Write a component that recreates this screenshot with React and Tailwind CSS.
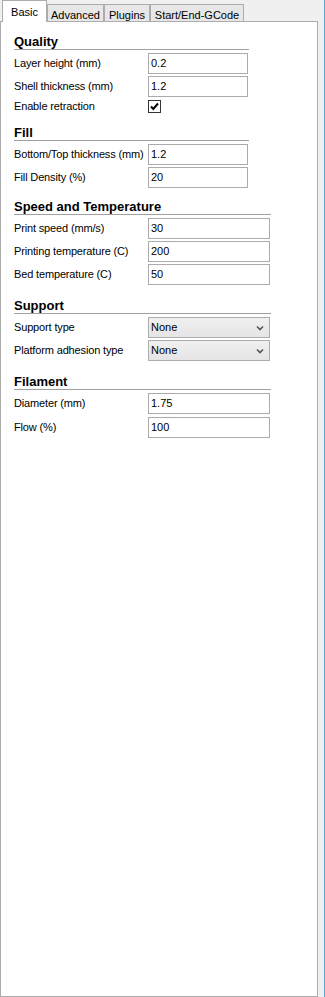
import React from "react";

function Header({ title, wide, className = "" }) {
  return (
    <div
      className={`${wide ? "w-[257px]" : "w-[235px]"} h-[15px] border-b border-[#a0a0a0] text-[13px] leading-[14px] font-bold text-black ${className}`}
    >
      {title}
    </div>
  );
}

function InputRow({ label, value, wide }) {
  return (
    <div className="flex items-center h-[21px]">
      <div className="w-[134px] text-[11px] leading-[13px] tracking-[-0.15px] text-black whitespace-nowrap">{label}</div>
      <div
        className={`${wide ? "w-[122px]" : "w-[100px]"} h-[21px] border border-[#ababab] bg-white flex items-center px-[2px] text-[11px] text-black`}
      >
        {value}
      </div>
    </div>
  );
}

function SelectRow({ label, value }) {
  return (
    <div className="flex items-center h-[21px]">
      <div className="w-[134px] text-[11px] leading-[13px] tracking-[-0.15px] text-black whitespace-nowrap">{label}</div>
      <div className="w-[122px] h-[21px] border border-[#acacac] bg-gradient-to-b from-[#f0f0f0] to-[#e5e5e5] flex items-center justify-between pl-[2px] pr-[5px] text-[11px] text-black">
        <span>{value}</span>
        <svg width="8" height="6" viewBox="0 0 8 6" className="mt-[1px]">
          <path d="M1 1.5 L4 4.5 L7 1.5" fill="none" stroke="#555" strokeWidth="1.6" />
        </svg>
      </div>
    </div>
  );
}

function Tab({ label, active, w }) {
  if (active) {
    return (
      <div
        className={`${w} h-[22px] relative top-[1px] z-10 bg-white border-l border-t border-r border-[#acacac] flex items-start justify-center pt-[3px] text-[11px] text-black`}
      >
        {label}
      </div>
    );
  }
  return (
    <div
      className={`${w} h-[17px] bg-[#e7e7e7] border-l border-t border-r border-[#acacac] flex items-start justify-center pt-[2px] text-[11px] text-black`}
    >
      {label}
    </div>
  );
}

export default function App() {
  return (
    <div
      className="w-[325px] h-[997px] bg-[#f0f0f0] flex overflow-hidden"
      style={{ fontFamily: '"Liberation Sans", Arial, sans-serif' }}
    >
      <div className="w-[318px] h-full flex flex-col">
        <div className="h-[21px] flex items-end pl-[2px]">
          <Tab label="Basic" active w="w-[45px]" />
          <Tab label="Advanced" w="w-[57px]" />
          <Tab label="Plugins" w="w-[46px]" />
          <Tab label="Start/End-GCode" w="w-[94px]" />
        </div>
        <div className="flex-1 bg-white border border-[#acacac] pl-[13px] pt-[13px] flex flex-col">
          <Header title="Quality" />
          <div className="mt-[3px] flex flex-col gap-[2px]">
            <InputRow label="Layer height (mm)" value="0.2" />
            <InputRow label="Shell thickness (mm)" value="1.2" />
            <div className="flex items-center h-[15px]">
              <div className="w-[134px] text-[11px] leading-[13px] tracking-[-0.15px] text-black">Enable retraction</div>
              <div className="w-[13px] h-[13px] border border-[#333] bg-white flex items-center justify-center">
                <svg width="11" height="11" viewBox="0 0 11 11">
                  <path d="M2 5.5 L4.3 8 L9 2.5" fill="none" stroke="#000" strokeWidth="2" />
                </svg>
              </div>
            </div>
          </div>

          <Header title="Fill" className="mt-[12px]" />
          <div className="mt-[3px] flex flex-col gap-[2px]">
            <InputRow label="Bottom/Top thickness (mm)" value="1.2" />
            <InputRow label="Fill Density (%)" value="20" />
          </div>

          <Header title="Speed and Temperature" wide className="mt-[12px]" />
          <div className="mt-[3px] flex flex-col gap-[2px]">
            <InputRow label="Print speed (mm/s)" value="30" wide />
            <InputRow label="Printing temperature (C)" value="200" wide />
            <InputRow label="Bed temperature (C)" value="50" wide />
          </div>

          <Header title="Support" wide className="mt-[14px]" />
          <div className="mt-[3px] flex flex-col gap-[2px]">
            <SelectRow label="Support type" value="None" />
            <SelectRow label="Platform adhesion type" value="None" />
          </div>

          <Header title="Filament" wide className="mt-[14px]" />
          <div className="mt-[3px] flex flex-col gap-[3px]">
            <InputRow label="Diameter (mm)" value="1.75" wide />
            <InputRow label="Flow (%)" value="100" wide />
          </div>
        </div>
      </div>
      <div className="w-[6px] h-full" />
      <div className="w-[1px] h-full bg-[#5aaad6]" />
    </div>
  );
}
